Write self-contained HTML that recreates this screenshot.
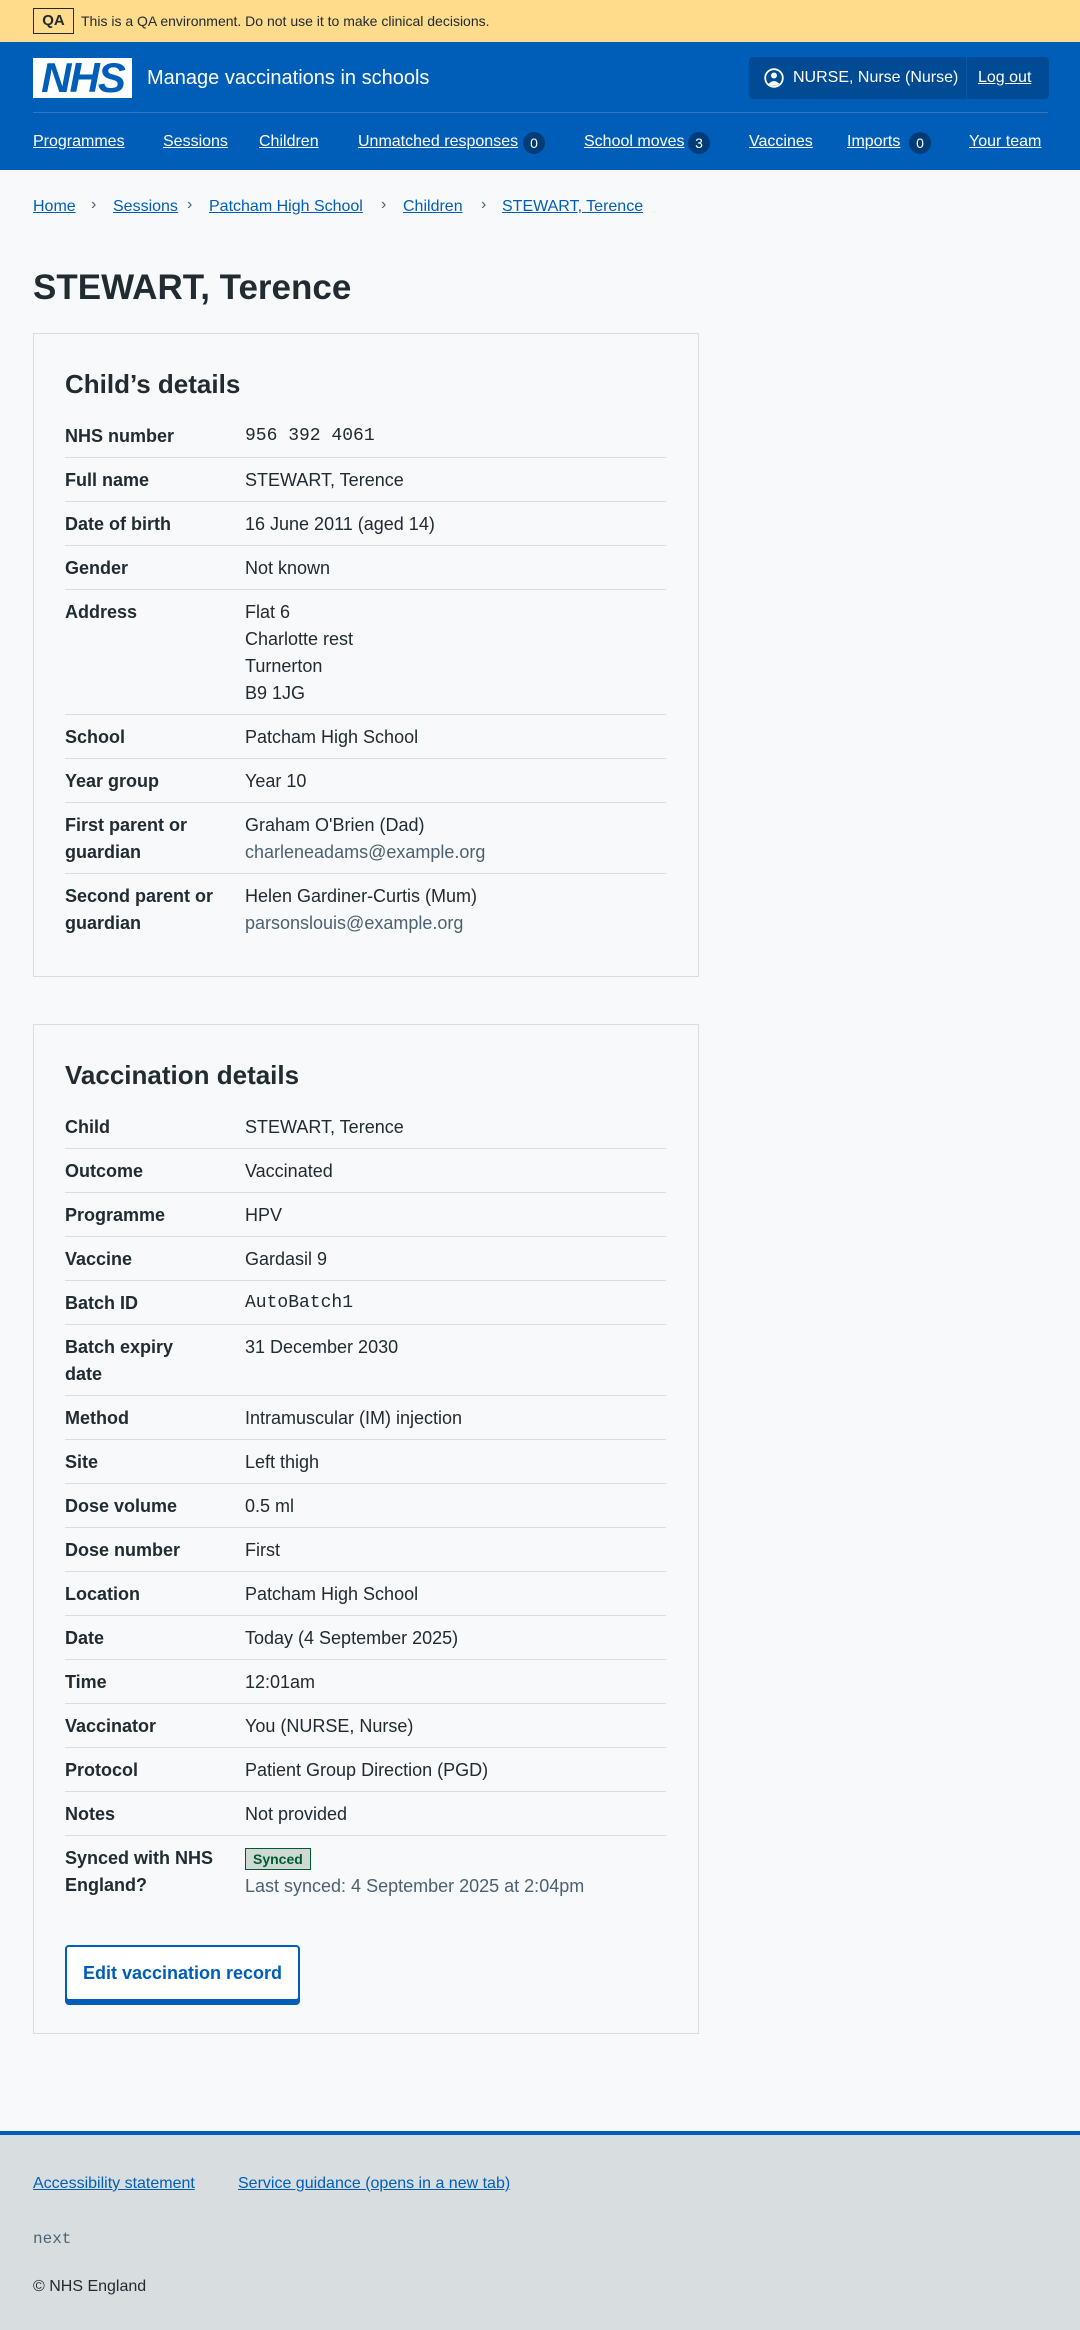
<!DOCTYPE html>
<html><head><meta charset="utf-8"><style>
*{box-sizing:border-box;margin:0;padding:0}
body{width:1080px;height:2330px;background:#f8f9fa;font-family:"Liberation Sans",sans-serif;color:#212b32;position:relative;overflow:hidden}
a{color:#005eb8;text-decoration:underline}
.abs{position:absolute}
.banner{position:absolute;left:0;top:0;width:1080px;height:42px;background:#ffdb8c}
.qa{position:absolute;left:33px;top:8px;width:41px;height:26px;border:1px solid #212b32;font-size:15px;font-weight:bold;text-align:center;line-height:24px;color:#212b32}
.bt{position:absolute;left:81px;top:13px;font-size:14px;color:#212b32}
.header{position:absolute;left:0;top:42px;width:1080px;height:128px;background:#005eb8}
.logo{position:absolute;left:33px;top:16px;width:99px;height:40px;background:#fff;color:#005eb8;font-weight:bold;font-style:italic;font-size:42px;line-height:40px;text-align:center;letter-spacing:-2px}
.title{position:absolute;left:147px;top:25px;font-size:20px;color:#fff}
.acct{position:absolute;left:749px;top:15px;width:300px;height:42px;background:#004b93;border-radius:4px}
.acct .sep{position:absolute;left:217px;top:0;width:1px;height:42px;background:#0b5aa6}
.acct .n{position:absolute;left:44px;top:12px;color:#fff;font-size:16px}
.acct .lo{position:absolute;left:229px;top:12px;color:#fff;font-size:16px}
.divl{position:absolute;left:33px;top:70px;width:1015px;height:1px;background:#2f78c4}
.nav a{position:absolute;top:91px;color:#fff;font-size:16px}
.badge{position:absolute;top:90px;width:22px;height:22px;border-radius:11px;background:#003d78;color:#fff;font-size:14px;text-align:center;line-height:22px}
.bc{position:absolute;top:198px;font-size:16px}
.chev{position:absolute;top:196px;font-size:16px;color:#4c6272}
h1{position:absolute;left:33px;top:268px;font-size:35px;font-weight:bold;color:#212b32}
.card{position:absolute;left:33px;width:666px;border:1px solid #d8dde0;background:#f8f9fa;padding:32px 32px 32px 31px}
.card h2{font-size:26px;line-height:32px;font-weight:bold;margin-bottom:14px;margin-top:2px}
.row{display:flex;border-bottom:1px solid #d8dde0;padding:9px 0 7px;font-size:18px;line-height:27px}
.row.last{border-bottom:none}
.k{width:180px;font-weight:bold;flex:none;white-space:nowrap}
.v{flex:1}
.mono{font-family:"Liberation Mono",monospace;font-size:18px}
.g{color:#4c6272}
.tag{display:inline-block;background:#cfd9d4;border:1px solid #005a30;color:#005a30;font-size:14px;font-weight:bold;line-height:20px;padding:0 7px;margin:2px 0 3px}
.btn{display:inline-block;margin-top:38px;border:2px solid #005eb8;box-shadow:0 4px 0 #005eb8;border-radius:4px;color:#005eb8;font-weight:bold;font-size:18px;padding:14px 16px;background:#fff;line-height:24px}
.footer{position:absolute;left:0;top:2131px;width:1080px;height:199px;background:#d8dde0;border-top:4px solid #005eb8}
</style></head><body>
<div class="banner"><div class="qa">QA</div><div class="bt">This is a QA environment. Do not use it to make clinical decisions.</div></div>
<div class="header">
<div class="logo">NHS</div>
<div class="title">Manage vaccinations in schools</div>
<div class="acct">
<svg class="abs" style="left:15px;top:11px" width="20" height="20" viewBox="0 0 20 20"><circle cx="10" cy="10" r="8.8" fill="none" stroke="#fff" stroke-width="1.8"/><circle cx="10" cy="7.5" r="3" fill="#fff"/><path d="M4.5 16 Q10 10 15.5 16 Q10 19.5 4.5 16Z" fill="#fff"/></svg>
<div class="n">NURSE, Nurse (Nurse)</div><div class="sep"></div><a class="lo" href="#">Log out</a></div>
<div class="divl"></div>
<div class="nav">
<a style="left:33px" href="#">Programmes</a>
<a style="left:163px" href="#">Sessions</a>
<a style="left:259px" href="#">Children</a>
<a style="left:358px" href="#">Unmatched responses</a><span class="badge" style="left:523px">0</span>
<a style="left:584px" href="#">School moves</a><span class="badge" style="left:688px">3</span>
<a style="left:749px" href="#">Vaccines</a>
<a style="left:847px" href="#">Imports</a><span class="badge" style="left:909px">0</span>
<a style="left:969px" href="#">Your team</a>
</div></div>
<a class="bc" style="left:33px" href="#">Home</a><span class="chev" style="left:91px">›</span>
<a class="bc" style="left:113px" href="#">Sessions</a><span class="chev" style="left:187px">›</span>
<a class="bc" style="left:209px" href="#">Patcham High School</a><span class="chev" style="left:381px">›</span>
<a class="bc" style="left:403px" href="#">Children</a><span class="chev" style="left:481px">›</span>
<a class="bc" style="left:502px" href="#">STEWART, Terence</a>
<h1>STEWART, Terence</h1>

<div class="card" style="top:333px">
<h2>Child’s details</h2>
<div class="row"><div class="k">NHS number</div><div class="v mono">956 392 4061</div></div>
<div class="row"><div class="k">Full name</div><div class="v">STEWART, Terence</div></div>
<div class="row"><div class="k">Date of birth</div><div class="v">16 June 2011 (aged 14)</div></div>
<div class="row"><div class="k">Gender</div><div class="v">Not known</div></div>
<div class="row"><div class="k">Address</div><div class="v">Flat 6<br>Charlotte rest<br>Turnerton<br>B9 1JG</div></div>
<div class="row"><div class="k">School</div><div class="v">Patcham High School</div></div>
<div class="row"><div class="k">Year group</div><div class="v">Year 10</div></div>
<div class="row"><div class="k">First parent or<br>guardian</div><div class="v">Graham O'Brien (Dad)<br><span class="g">charleneadams@example.org</span></div></div>
<div class="row last"><div class="k">Second parent or<br>guardian</div><div class="v">Helen Gardiner-Curtis (Mum)<br><span class="g">parsonslouis@example.org</span></div></div>
</div>

<div class="card" style="top:1024px">
<h2>Vaccination details</h2>
<div class="row"><div class="k">Child</div><div class="v">STEWART, Terence</div></div>
<div class="row"><div class="k">Outcome</div><div class="v">Vaccinated</div></div>
<div class="row"><div class="k">Programme</div><div class="v">HPV</div></div>
<div class="row"><div class="k">Vaccine</div><div class="v">Gardasil 9</div></div>
<div class="row"><div class="k">Batch ID</div><div class="v mono">AutoBatch1</div></div>
<div class="row"><div class="k">Batch expiry<br>date</div><div class="v">31 December 2030</div></div>
<div class="row"><div class="k">Method</div><div class="v">Intramuscular (IM) injection</div></div>
<div class="row"><div class="k">Site</div><div class="v">Left thigh</div></div>
<div class="row"><div class="k">Dose volume</div><div class="v">0.5 ml</div></div>
<div class="row"><div class="k">Dose number</div><div class="v">First</div></div>
<div class="row"><div class="k">Location</div><div class="v">Patcham High School</div></div>
<div class="row"><div class="k">Date</div><div class="v">Today (4 September 2025)</div></div>
<div class="row"><div class="k">Time</div><div class="v">12:01am</div></div>
<div class="row"><div class="k">Vaccinator</div><div class="v">You (NURSE, Nurse)</div></div>
<div class="row"><div class="k">Protocol</div><div class="v">Patient Group Direction (PGD)</div></div>
<div class="row"><div class="k">Notes</div><div class="v">Not provided</div></div>
<div class="row last"><div class="k">Synced with NHS<br>England?</div><div class="v"><span class="tag">Synced</span><br><span class="g">Last synced: 4 September 2025 at 2:04pm</span></div></div>
<span class="btn">Edit vaccination record</span>
</div>

<div class="footer">
<a class="abs" style="left:33px;top:40px;font-size:16px" href="#">Accessibility statement</a>
<a class="abs" style="left:238px;top:40px;font-size:16px" href="#">Service guidance (opens in a new tab)</a>
<div class="abs" style="left:33px;top:95px;font-size:16px;font-family:'Liberation Mono',monospace;color:#4c6272">next</div>
<div class="abs" style="left:33px;top:143px;font-size:16px;color:#212b32">© NHS England</div>
</div>
</body></html>
